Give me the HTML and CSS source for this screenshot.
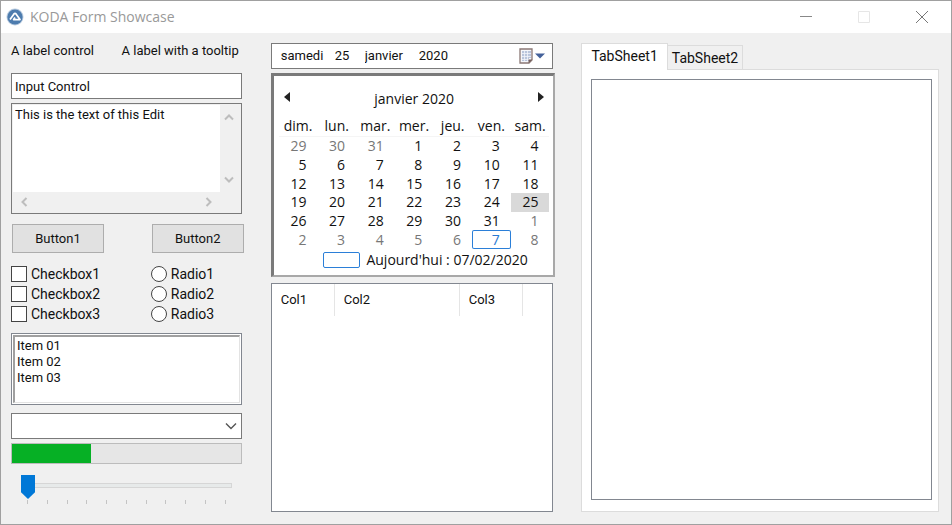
FILE: index.html
```html
<!DOCTYPE html>
<html lang="fr">
<head>
<meta charset="utf-8">
<title>KODA Form Showcase</title>
<link rel="stylesheet" href="styles.css">
</head>
<body>
<div class="window">
  <header class="titlebar">
    <svg class="logo" viewBox="0 0 18 18" aria-hidden="true"><circle cx="9" cy="9" r="8.5" fill="#b9cbdf"/><circle cx="9" cy="9" r="7.6" fill="#4d7cae"/><path d="M4 11.600 8 5.900Q9 4.700 10 5.900L14 11.600H7.600L9 9.600" fill="none" stroke="#fff" stroke-width="1.7" stroke-linejoin="round"/></svg>
    <h1 class="title">KODA Form Showcase</h1>
    <button class="caption" type="button" aria-label="Minimize"><svg viewBox="0 0 12 12"><path d="M0 5.500H12" stroke="#888"/></svg></button>
    <button class="caption" type="button" aria-label="Maximize" disabled><svg viewBox="0 0 12 12"><path d="M.5.5H11.5V11.5H.5Z" fill="none" stroke="#e6e6e6"/></svg></button>
    <button class="caption" type="button" aria-label="Close"><svg viewBox="0 0 12 12"><path d="M0 0 12 12M12 0 0 12" stroke="#777"/></svg></button>
  </header>
  <main class="form">
    <section class="column">
      <div class="labels">
        <label for="input1">A label control</label>
        <label for="edit1">A label with a tooltip</label>
      </div>
      <input class="field" id="input1" type="text" value="Input Control">
      <div class="edit">
        <textarea id="edit1">This is the text of this Edit</textarea>
        <div class="bar bar-v">
          <button type="button" aria-label="Scroll up"><svg viewBox="0 0 10 10"><path d="M1 7.500 5 3.500 9 7.500"/></svg></button>
          <button type="button" aria-label="Scroll down"><svg viewBox="0 0 10 10"><path d="M1 2.500 5 6.500 9 2.500"/></svg></button>
        </div>
        <div class="bar bar-h">
          <button type="button" aria-label="Scroll left"><svg viewBox="0 0 10 10"><path d="M7.500 1 3.500 5 7.500 9"/></svg></button>
          <button type="button" aria-label="Scroll right"><svg viewBox="0 0 10 10"><path d="M2.500 1 6.500 5 2.500 9"/></svg></button>
        </div>
      </div>
      <div class="buttons">
        <button class="push" type="button">Button1</button>
        <button class="push" type="button">Button2</button>
      </div>
      <div class="choices">
        <label><input type="checkbox">Checkbox1</label>
        <label><input type="radio" name="radio">Radio1</label>
        <label><input type="checkbox">Checkbox2</label>
        <label><input type="radio" name="radio">Radio2</label>
        <label><input type="checkbox">Checkbox3</label>
        <label><input type="radio" name="radio">Radio3</label>
      </div>
      <div class="listframe">
        <select class="listbox" size="4" aria-label="Items">
          <option>Item 01</option>
          <option>Item 02</option>
          <option>Item 03</option>
        </select>
      </div>
      <div class="combo">
        <select aria-label="Combo"><option></option></select>
        <svg viewBox="0 0 12 8" aria-hidden="true"><path d="M1 1.500 6 6.500 11 1.500"/></svg>
      </div>
      <progress class="progress" value="34.5" max="100" aria-label="Progress"></progress>
      <div class="slider">
        <input type="range" min="0" max="10" value="0" aria-label="Slider">
        <div class="ticks"><i></i><i></i><i></i><i></i><i></i><i></i><i></i><i></i><i></i><i></i><i></i></div>
      </div>
    </section>

    <section class="column middle">
      <div class="date">
        <input class="word" type="text" value="samedi" aria-label="Jour de la semaine">
        <input class="num" type="text" value="25" aria-label="Jour">
        <input class="word" type="text" value="janvier" aria-label="Mois">
        <input class="year" type="text" value="2020" aria-label="Année">
        <button type="button" aria-label="Ouvrir le calendrier">
          <svg viewBox="0 0 26 16"><path d="M1 1H13V12L10 15H1Z" fill="#f5f6fa" stroke="#8a7875" stroke-width="1.300"/><path d="M3 3H12V10H10V13H3Z" fill="#b9c5dc"/><path d="M3 5.500H12M3 8.500H12M3 11.500H10M5.500 3V13M8.500 3V13" stroke="#f1f4fa" stroke-width=".8"/><path d="M9.500 15V11.500H13.500Z" fill="#755f5c"/><path d="M16 5.500H26L21 10.500Z" fill="#44619a"/></svg>
        </button>
      </div>
      <div class="calendar">
        <div class="month">
          <button type="button" aria-label="Mois précédent"><svg viewBox="0 0 6 10"><path d="M6 0V10L0 5Z"/></svg></button>
          <span>janvier 2020</span>
          <button type="button" aria-label="Mois suivant"><svg viewBox="0 0 6 10"><path d="M0 0V10L6 5Z"/></svg></button>
        </div>
        <table class="days">
          <thead><tr><th>dim.</th><th>lun.</th><th>mar.</th><th>mer.</th><th>jeu.</th><th>ven.</th><th>sam.</th></tr></thead>
          <tbody>
            <tr><td class="off">29</td><td class="off">30</td><td class="off">31</td><td>1</td><td>2</td><td>3</td><td>4</td></tr>
            <tr><td>5</td><td>6</td><td>7</td><td>8</td><td>9</td><td>10</td><td>11</td></tr>
            <tr><td>12</td><td>13</td><td>14</td><td>15</td><td>16</td><td>17</td><td>18</td></tr>
            <tr><td>19</td><td>20</td><td>21</td><td>22</td><td>23</td><td>24</td><td class="selected">25</td></tr>
            <tr><td>26</td><td>27</td><td>28</td><td>29</td><td>30</td><td>31</td><td class="off">1</td></tr>
            <tr><td class="off">2</td><td class="off">3</td><td class="off">4</td><td class="off">5</td><td class="off">6</td><td class="today">7</td><td class="off">8</td></tr>
          </tbody>
        </table>
        <div class="now"><span class="mark"></span>Aujourd'hui : 07/02/2020</div>
      </div>
      <div class="listview">
        <table>
          <thead><tr><th class="c1">Col1</th><th class="c2">Col2</th><th class="c3">Col3</th><td></td></tr></thead>
        </table>
      </div>
    </section>

    <section class="column tabs">
      <div class="tablist" role="tablist">
        <button class="tab active" type="button" role="tab" aria-selected="true">TabSheet1</button>
        <button class="tab" type="button" role="tab" aria-selected="false">TabSheet2</button>
      </div>
      <div class="panel" role="tabpanel"><div class="sheet"></div></div>
    </section>
  </main>
</div>
</body>
</html>
```
FILE: styles.css
```css
* { box-sizing: border-box; }

body {
  margin: 0;
  font: 13px/16px Roboto, "Liberation Sans", sans-serif;
  color: #111;
}

button, input, select, textarea {
  margin: 0;
  padding: 0;
  border: 0;
  border-radius: 0;
  outline: 0;
  font: inherit;
  color: inherit;
}

button { background: none; }
svg { display: block; }

.window {
  display: flex;
  flex-direction: column;
  min-height: 100vh;
  border: 1px solid #a0a0a0;
  background: #f0f0f0;
}

.titlebar {
  display: flex;
  align-items: center;
  height: 32px;
  padding-left: 5px;
  background: #fff;
}

.logo { width: 18px; height: 18px; }

.title {
  flex: 1;
  margin: 0 0 0 6px;
  font: 14px/20px "Open Sans", sans-serif;
  color: #999;
}

.caption {
  display: grid;
  place-items: center;
  width: 58px;
  height: 32px;
}

.caption svg { width: 12px; height: 12px; }

.form {
  flex: 1;
  display: grid;
  grid-template-columns: 231fr 282fr 358fr;
  column-gap: 29px;
  padding: 10px 12px 12px 10px;
}

.column {
  display: flex;
  flex-direction: column;
  min-width: 0;
}

.middle { margin-right: -1px; }

.labels {
  display: flex;
  justify-content: space-between;
  height: 30px;
  padding-right: 3px;
  white-space: nowrap;
}

.field {
  height: 26px;
  padding: 0 3px;
  border: 1px solid #7a7a7a;
  background: #fff;
}

.edit {
  display: grid;
  grid-template: 1fr 20px / 1fr 20px;
  height: 111px;
  margin-top: 4px;
  padding: 1px;
  border: 1px solid #7a7a7a;
  background: #f0f0f0;
}

.edit textarea {
  padding: 2px;
  background: #fff;
  resize: none;
  overflow: hidden;
}

.bar {
  display: flex;
  justify-content: space-between;
  padding: 7px 6px 7px 4px;
}

.bar-v { flex-direction: column; }
.bar-h { padding: 4px 6px; }
.bar svg { width: 10px; height: 10px; fill: none; stroke: #bdbdbd; stroke-width: 2; }

.buttons {
  display: flex;
  justify-content: space-between;
  margin: 10px -2px 0 1px;
}

.push {
  width: 92px;
  height: 29px;
  border: 1px solid #adadad;
  background: #e1e1e1;
}

.choices {
  display: grid;
  grid-template-columns: 140fr 91fr;
  margin-top: 11px;
  font-size: 14px;
}

.choices label {
  display: flex;
  align-items: center;
  gap: 4px;
  height: 20px;
}

.choices input {
  appearance: none;
  width: 16px;
  height: 16px;
  border: 1px solid #444;
  background: #fff;
}

.choices input[type="radio"] { border-radius: 50%; }

.listframe {
  margin-top: 9px;
  height: 72px;
  padding: 1px;
  border: 1px solid #828790;
  background: #fff;
}

.listbox {
  width: 100%;
  height: 100%;
  padding: 1px 2px;
  border: 1px solid #e3e3e3;
  border-top: 2px solid #a0a0a0;
  border-left: 2px solid #a0a0a0;
  background: #fff;
  overflow: hidden;
}

.listbox option { min-height: 16px; padding: 0; }

.combo {
  position: relative;
  margin-top: 8px;
}

.combo select {
  appearance: none;
  display: block;
  width: 100%;
  height: 26px;
  border: 1px solid #7a7a7a;
  background: #fff;
}

.combo svg {
  position: absolute;
  right: 5px;
  top: 9px;
  width: 12px;
  height: 8px;
  fill: none;
  stroke: #555;
  stroke-width: 1.4;
  pointer-events: none;
}

.progress {
  appearance: none;
  display: block;
  width: 100%;
  height: 21px;
  margin-top: 4px;
  border: 1px solid #bcbcbc;
  background: #e6e6e6;
}

.progress::-webkit-progress-bar { background: #e6e6e6; }
.progress::-webkit-progress-value { background: #06b025; }

.slider { padding: 12px 10px 0; }

.slider input {
  appearance: none;
  display: block;
  width: 100%;
  height: 24px;
  background: none;
}

.slider input::-webkit-slider-runnable-track {
  height: 5px;
  margin-bottom: 5px;
  border: 1px solid #d6d6d6;
  background: #e7eaea;
}

.slider input::-webkit-slider-thumb {
  appearance: none;
  width: 14px;
  height: 24px;
  margin-top: -9px;
  margin-left: -1px;
  background: #0078d7;
  clip-path: polygon(0 0, 100% 0, 100% 72%, 50% 100%, 0 72%);
}

.ticks {
  display: flex;
  justify-content: space-between;
  padding: 0 6px;
}

.ticks i { width: 1px; height: 4px; background: #c4c4c4; }

.date {
  display: flex;
  align-items: center;
  height: 26px;
  padding: 0 7px 0 9px;
  border: 1px solid #7a7a7a;
  background: #fff;
}

.date input { background: none; }
.word { width: 54px; }
.word + .num { width: 30px; }
.year { flex: 1; min-width: 0; }
.date svg { width: 26px; height: 16px; }

.calendar {
  height: 204px;
  margin: 4px -2px 0 0;
  padding: 0 4px 0 5px;
  border: 2px solid #a8a8a8;
  border-top: 3px solid #7a7a7a;
  border-left: 3px solid #7a7a7a;
  background: #fff;
  font-family: "Open Sans", sans-serif;
  font-size: 14px;
}

.month {
  display: flex;
  justify-content: space-between;
  padding: 13px 5px 0;
  line-height: 20px;
}

.month button { height: 16px; }
.month svg { width: 6px; height: 10px; fill: #222; }

.days {
  width: 100%;
  height: 132px;
  margin-top: 8px;
  border-spacing: 0;
  table-layout: fixed;
  line-height: 18px;
}

.days th {
  height: 20px;
  padding: 0 0 2px;
  border-bottom: 1px solid #f5f5f5;
  font-weight: 400;
  line-height: 17px;
}

.days td { padding: 0 11px 0 0; text-align: right; }
.days .off { color: #777; }
.days .selected { background: #d9d9d9; }

.days .today {
  color: #2a7ad2;
  box-shadow: inset 0 0 0 1px #2b7fd8;
  border-radius: 2px;
}

.now {
  display: flex;
  align-items: center;
  justify-content: center;
  gap: 6px;
  padding-left: 23px;
  line-height: 22px;
  white-space: nowrap;
}

.mark {
  width: 37px;
  height: 16px;
  border: 1px solid #2b7fd8;
  border-radius: 2px;
}

.listview {
  flex: 1;
  margin-top: 6px;
  border: 1px solid #828790;
  background: #fff;
}

.listview table {
  width: 100%;
  border-spacing: 0;
  table-layout: fixed;
}

.listview th {
  height: 32px;
  padding: 0 0 0 9px;
  border-right: 1px solid #e5e5e5;
  font-weight: 400;
  text-align: left;
}

.c1 { width: 63px; }
.c2 { width: 125px; }
.c3 { width: 63px; }

.tablist {
  display: flex;
  align-items: flex-end;
  font-size: 14px;
}

.tab {
  height: 24px;
  padding: 0 4px;
  border: 1px solid #dcdcdc;
  border-left: 0;
  border-bottom: 0;
  background: #f0f0f0;
}

.active {
  position: relative;
  height: 27px;
  margin-bottom: -1px;
  padding: 0 9px 3px;
  border-left: 1px solid #dcdcdc;
  background: #fff;
}

.panel {
  flex: 1;
  display: grid;
  padding: 9px 6px 11px 9px;
  border: 1px solid #dcdcdc;
  background: #fff;
}

.sheet { border: 1px solid #828790; }
```
